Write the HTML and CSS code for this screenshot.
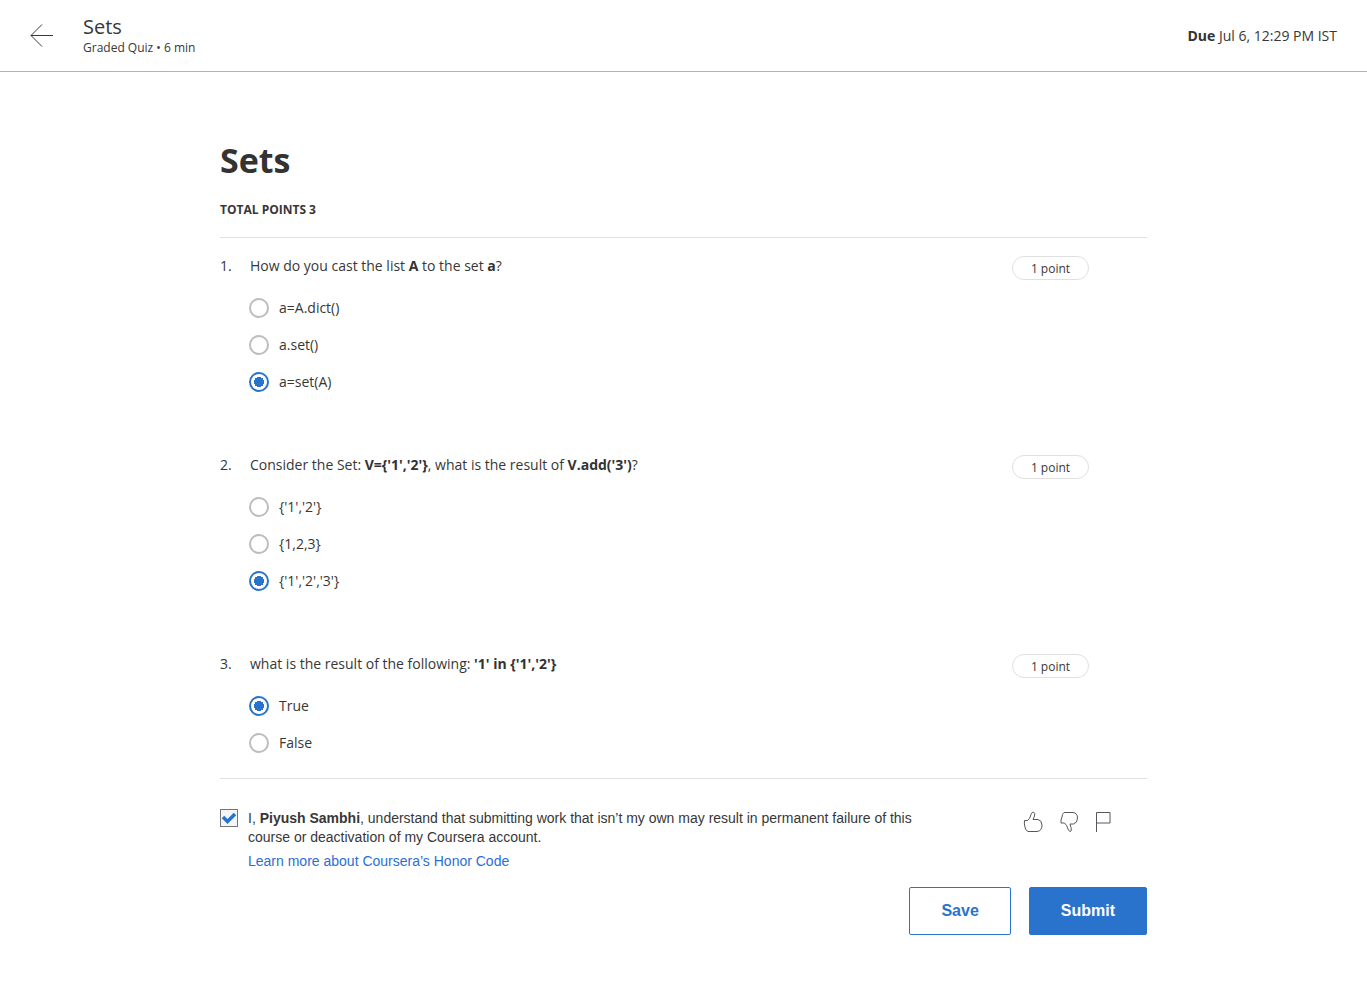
FILE: index.html
```html
<!DOCTYPE html>
<html lang="en">
<head>
<meta charset="utf-8">
<meta name="viewport" content="width=device-width, initial-scale=1">
<title>Sets</title>
<link rel="stylesheet" href="styles.css">
</head>
<body>
<header class="topbar">
  <button class="icon-button back" type="button" aria-label="Back">
    <svg width="24" height="24" viewBox="0 0 24 24"><path d="M23 11.500H1M12 .5L1 11.500l11 11"/></svg>
  </button>
  <div class="topbar-title">
    <div class="item-name">Sets</div>
    <div class="item-kind">Graded Quiz • 6 min</div>
  </div>
  <div class="due"><strong>Due</strong> Jul 6, 12:29 PM IST</div>
</header>

<main class="quiz">
  <h1 class="quiz-title">Sets</h1>
  <div class="total">TOTAL POINTS 3</div>

  <form>
    <div class="questions">
      <section class="question" role="radiogroup" aria-labelledby="q1">
        <span class="number">1.</span>
        <div class="body">
          <p class="prompt" id="q1">How do you cast the list <strong>A</strong> to the set <strong>a</strong>?</p>
          <label class="option"><input type="radio" name="q1">a=A.dict()</label>
          <label class="option"><input type="radio" name="q1">a.set()</label>
          <label class="option"><input type="radio" name="q1" checked>a=set(A)</label>
        </div>
        <span class="points">1 point</span>
      </section>

      <section class="question" role="radiogroup" aria-labelledby="q2">
        <span class="number">2.</span>
        <div class="body">
          <p class="prompt" id="q2">Consider the Set: <strong>V={'1','2'}</strong>, what is the result of <strong>V.add('3')</strong>?</p>
          <label class="option"><input type="radio" name="q2">{'1','2'}</label>
          <label class="option"><input type="radio" name="q2">{1,2,3}</label>
          <label class="option"><input type="radio" name="q2" checked>{'1','2','3'}</label>
        </div>
        <span class="points">1 point</span>
      </section>

      <section class="question" role="radiogroup" aria-labelledby="q3">
        <span class="number">3.</span>
        <div class="body">
          <p class="prompt" id="q3">what is the result of the following: <strong>'1' in {'1','2'}</strong></p>
          <label class="option"><input type="radio" name="q3" checked>True</label>
          <label class="option"><input type="radio" name="q3">False</label>
        </div>
        <span class="points">1 point</span>
      </section>
    </div>

    <div class="agreement">
      <input class="agree-box" type="checkbox" id="agree" checked>
      <div class="agree-text">
        <label for="agree">I, <strong>Piyush Sambhi</strong>, understand that submitting work that isn’t my own may result in permanent failure of this course or deactivation of my Coursera account.</label>
        <a class="honor-link" href="#">Learn more about Coursera’s Honor Code</a>
      </div>
      <div class="feedback">
        <button class="icon-button" type="button" aria-label="Like">
          <svg width="20" height="22" viewBox="0 0 20 22"><path d="M1.500 9.500H4.500Q7 8 8 3.500Q9 1 10.500 1Q12.500 2 11.500 5L10 8.500H15Q19 9.500 19 14Q19 20 14 20.500H5Q2 19 2 16Q1 13 1.500 9.500Z"/></svg>
        </button>
        <button class="icon-button" type="button" aria-label="Dislike">
          <svg width="20" height="22" viewBox="0 0 20 22"><path d="M2 12H5.500Q8 14 9 18Q10 20.500 11.500 20.500Q13 19.500 12 16.500L11 13H14.500Q18.500 12 18.500 7Q18.500 2 14 1.500H5Q3 3 3 6Q1.500 9 2 12Z"/></svg>
        </button>
        <button class="icon-button" type="button" aria-label="Flag">
          <svg width="20" height="22" viewBox="0 0 20 22"><path d="M1.500 21V1.500H15V12H1.500"/></svg>
        </button>
      </div>
    </div>

    <div class="actions">
      <button class="button" type="button">Save</button>
      <button class="button primary" type="submit">Submit</button>
    </div>
  </form>
</main>
</body>
</html>
```
FILE: styles.css
```css
* { box-sizing: border-box; }

body {
  margin: 0;
  background: #fff;
  color: #373737;
  font: 14px/20px "Open Sans", sans-serif;
}

.topbar {
  display: flex;
  align-items: center;
  padding: 12px 30px;
  min-height: 72px;
  border-bottom: 1px solid #b4b4b4;
}

.icon-button {
  display: flex;
  padding: 0;
  border: 0;
  background: none;
  cursor: pointer;
}

.icon-button svg {
  fill: none;
  stroke: #55585c;
  stroke-width: 1;
}

.back { margin-right: 29px; }
.back svg { stroke: #373a3c; }
.topbar-title { flex: 1; padding-bottom: 2px; }
.item-name { font-size: 20px; line-height: 26px; }
.item-kind { font-size: 12px; line-height: 16px; }

.quiz {
  max-width: 927px;
  margin: 0 auto;
  padding: 64px 0;
}

.quiz-title {
  margin: 0;
  font-size: 34px;
  line-height: 48px;
  color: #333;
}

.total {
  margin-top: 18px;
  font-size: 12px;
  line-height: 16px;
  font-weight: 700;
}

.questions {
  display: flex;
  flex-direction: column;
  gap: 55px;
  margin-top: 19px;
  padding: 18px 58px 17px 0;
  border-top: 1px solid #e0e0e0;
  border-bottom: 1px solid #e0e0e0;
}

.question { display: flex; align-items: flex-start; }
.number { width: 29px; }
.body { flex: 1; }
.prompt { margin: 0 0 13px 1px; }
.question strong, .due strong { color: #333; }

.option {
  display: flex;
  align-items: center;
  width: fit-content;
  height: 37px;
}

.option input {
  appearance: none;
  width: 20px;
  height: 20px;
  margin: 0 10px 0 0;
  border: 2px solid #bdbdbd;
  border-radius: 50%;
  background: #fff;
}

.option input:checked {
  border-color: #2a73cc;
  background: radial-gradient(circle, #2a73cc 5px, #fff 5px);
}

.points {
  min-width: 77px;
  padding-top: 1px;
  border: 1px solid #e0e0e0;
  border-radius: 12px;
  font-size: 12px;
  line-height: 21px;
  text-align: center;
}

.agreement {
  display: flex;
  align-items: flex-start;
  padding-top: 30px;
  font-family: "Liberation Sans", Arial, sans-serif;
}

.agree-box {
  appearance: none;
  flex: none;
  width: 18px;
  height: 18px;
  margin: 0 10px 0 0;
  border: 1px solid #757575;
  background: #f5f5f5 url("data:image/svg+xml,%3Csvg xmlns='http://www.w3.org/2000/svg' viewBox='0 0 16 16'%3E%3Cpath d='M2 7l4.500 4.500L14 4' fill='none' stroke='%232a73cc' stroke-width='3.500'/%3E%3C/svg%3E");
}

.agree-text { width: 664px; line-height: 19px; }
.honor-link { display: block; margin-top: 5px; color: #2a6fd6; text-decoration: none; }

.feedback { display: flex; gap: 16px; margin: 2px 32px 0 auto; }

.actions {
  display: flex;
  justify-content: flex-end;
  gap: 18px;
  margin-top: 16px;
}

.button {
  min-height: 48px;
  padding: 0 31px;
  border: 1px solid #2a73cc;
  border-radius: 2px;
  background: #fff;
  color: #2a73cc;
  font: 700 16px/24px "Liberation Sans", Arial, sans-serif;
}

.primary { background: #2a73cc; color: #fff; }
```
